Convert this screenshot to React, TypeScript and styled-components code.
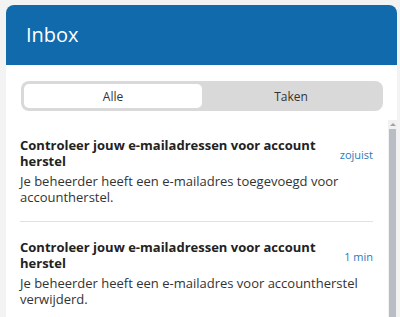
import React, { useState } from 'react'
import styled, { createGlobalStyle } from 'styled-components'

const GlobalStyle = createGlobalStyle`
  html, body {
    margin: 0;
    padding: 0;
    overflow: hidden;
    background: #f3f3f3;
    font-family: 'Open Sans', 'Liberation Sans', sans-serif;
  }
`

const messages = [
  {
    title: 'Controleer jouw e-mailadressen voor account herstel',
    body: 'Je beheerder heeft een e-mailadres toegevoegd voor accountherstel.',
    time: 'zojuist',
  },
  {
    title: 'Controleer jouw e-mailadressen voor account herstel',
    body: 'Je beheerder heeft een e-mailadres voor accountherstel verwijderd.',
    time: '1 min',
  },
]

const App = () => {
  const [tab, setTab] = useState('alle')

  return (
    <>
      <GlobalStyle />
      <Page>
        <Card>
          <Header>Inbox</Header>
          <TabsWrap>
            <Segmented>
              <Tab active={tab === 'alle'} onClick={() => setTab('alle')}>
                Alle
              </Tab>
              <Tab active={tab === 'taken'} onClick={() => setTab('taken')}>
                Taken
              </Tab>
            </Segmented>
          </TabsWrap>
          <ListRow>
            <List>
              {messages.map((m, i) => (
                <Item key={i}>
                  <ItemHead>
                    <ItemTitle>{m.title}</ItemTitle>
                    <ItemTime>{m.time}</ItemTime>
                  </ItemHead>
                  <ItemBody>{m.body}</ItemBody>
                </Item>
              ))}
            </List>
            <ScrollTrack>
              <ScrollArrow />
              <ScrollThumb />
            </ScrollTrack>
          </ListRow>
        </Card>
      </Page>
    </>
  )
}

// page
const Page = styled.div`
  padding: 5px 3px 0 6px;
`

const Card = styled.div`
  background: #fff;
  border-radius: 8px 8px 0 0;
  overflow: hidden;
  display: flex;
  flex-direction: column;
`

// header
const Header = styled.div`
  height: 60px;
  background: #116aab;
  color: #fff;
  font-size: 20px;
  display: flex;
  align-items: center;
  padding-left: 20px;
  padding-bottom: 2px;
  box-sizing: border-box;
`

// tabs
const TabsWrap = styled.div`
  padding: 16px 14px 9px 15px;
`

const Segmented = styled.div`
  display: grid;
  grid-template-columns: 1fr 1fr;
  background: #d9d9d9;
  border-radius: 8px;
  padding: 3px;
  height: 30px;
  box-sizing: border-box;
`

const Tab = styled.div<{ active?: boolean }>`
  display: flex;
  align-items: center;
  justify-content: center;
  font-size: 12px;
  color: #333;
  border-radius: 5px;
  background: ${({ active }) => (active ? '#fff' : 'transparent')};
  cursor: pointer;
`

// list
const ListRow = styled.div`
  display: flex;
  height: 200px;
`

const List = styled.div`
  flex: 1;
  overflow: hidden;
  padding: 0 15px 0 14px;
`

// scrollbar drawing
const ScrollTrack = styled.div`
  width: 9px;
  background: #f1f1f1;
  display: flex;
  flex-direction: column;
  align-items: center;
`

const ScrollArrow = styled.div`
  margin-top: 3px;
  width: 0;
  height: 0;
  border-left: 3px solid transparent;
  border-right: 3px solid transparent;
  border-bottom: 3px solid #a3a3a3;
`

const ScrollThumb = styled.div`
  margin-top: 3px;
  width: 7px;
  flex: 1;
  background: #b9bec4;
`

const Item = styled.div`
  padding: 17px 0 16px;
  border-bottom: 1px solid #e1e1e1;

  &:last-child {
    border-bottom: none;
  }
`

const ItemHead = styled.div`
  display: flex;
  align-items: center;
  gap: 8px;
`

const ItemTitle = styled.div`
  flex: 1;
  font-size: 13px;
  font-weight: 700;
  line-height: 16px;
  color: #222;
`

const ItemTime = styled.div`
  font-size: 11px;
  color: #2a7ab7;
  white-space: nowrap;
  padding-top: 2px;
`

const ItemBody = styled.div`
  margin-top: 4px;
  font-size: 13px;
  line-height: 16px;
  color: #333;
`

export default App
